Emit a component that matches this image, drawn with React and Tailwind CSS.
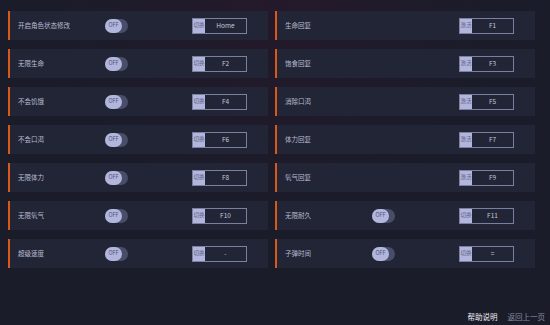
import React from "react";

const left = [
  ["开启角色状态修改", "Home"],
  ["无限生命", "F2"],
  ["不会饥饿", "F4"],
  ["不会口渴", "F6"],
  ["无限体力", "F8"],
  ["无限氧气", "F10"],
  ["超级速度", "-"],
];
const right = [
  ["生命回复", "F1", false],
  ["饱食回复", "F3", false],
  ["消除口渴", "F5", false],
  ["体力回复", "F7", false],
  ["氧气回复", "F9", false],
  ["无限耐久", "F11", true],
  ["子弹时间", "=", true],
];

function Toggle() {
  return (
    <div className="w-[23px] h-[14px] rounded-full bg-[#4a4d68] flex items-center">
      <div className="w-[17px] h-[14px] rounded-full bg-[#b3b6dc] flex items-center justify-center text-[5.5px] leading-none text-[#4f5378]">
        OFF
      </div>
    </div>
  );
}

function Hotkey({ label, value }) {
  return (
    <div className="w-[55px] h-[16px] border border-[#7c7fa0] flex">
      <div className="w-[12px] h-full bg-[#b3b6dc] text-[5.5px] leading-none text-[#5a5e80] flex items-center justify-center whitespace-nowrap overflow-hidden">
        {label}
      </div>
      <div className="flex-1 flex items-center justify-center text-[6.5px] leading-none text-[#c5c8dc]">
        {value}
      </div>
    </div>
  );
}

function Row({ name, hotkeyLabel, value, toggle }) {
  return (
    <div className="h-[29px] bg-[#222536] border-l-2 border-[#d9591b] flex items-center pl-[8px]">
      <div className="w-[87px] shrink-0 text-[6.5px] leading-none text-[#b9bcd0]">{name}</div>
      {toggle ? <Toggle /> : <div className="w-[23px]" />}
      <div className="ml-[64px]">
        <Hotkey label={hotkeyLabel} value={value} />
      </div>
    </div>
  );
}

export default function App() {
  return (
    <div
      className="w-[550px] h-[325px] bg-[#1a1c2a] flex flex-col overflow-hidden"
      style={{ fontFamily: '"Noto Sans CJK SC", "Noto Sans", sans-serif' }}
    >
      <div className="pt-[11px] pl-[8px] grid grid-cols-[260px_260px] gap-x-[7px] gap-y-[9px] bg-[radial-gradient(ellipse_at_50%_0%,#24192a_0%,#1a1c2a_60%)]">
        {left.map((l, i) => (
          <React.Fragment key={i}>
            <Row name={l[0]} hotkeyLabel="切换" value={l[1]} toggle={true} />
            <Row name={right[i][0]} hotkeyLabel={right[i][2] ? "切换" : "激活"} value={right[i][1]} toggle={right[i][2]} />
          </React.Fragment>
        ))}
      </div>
      <div className="mt-auto flex justify-end gap-[10px] pr-[5px] pb-[2px] text-[7.5px] leading-[12px]">
        <span className="text-[#f0f0f5]">帮助说明</span>
        <span className="text-[#8a8ca0]">返回上一页</span>
      </div>
    </div>
  );
}
